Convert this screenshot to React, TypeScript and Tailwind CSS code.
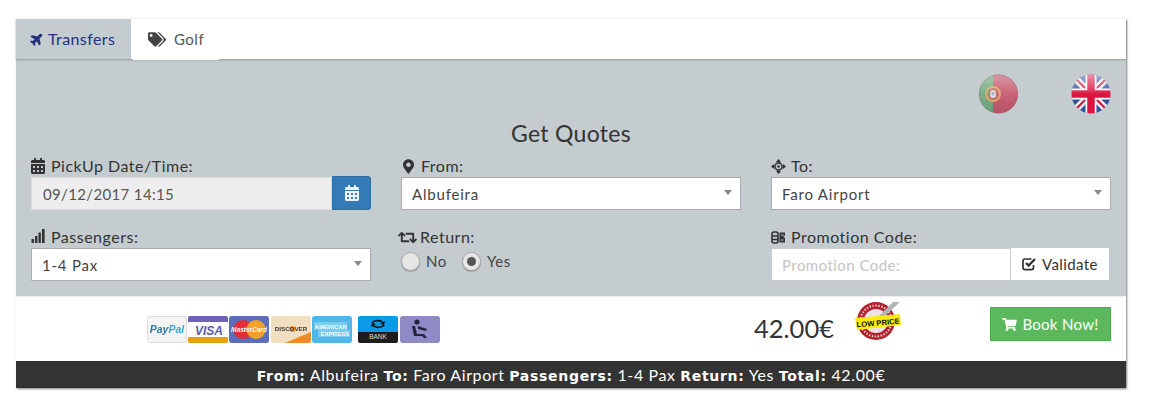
import React from "react";
import { FaTags, FaCalendarAlt, FaMapMarkerAlt, FaRetweet, FaShoppingCart, FaPlane } from "react-icons/fa";

const font = { fontFamily: "Lato, sans-serif" };
const cardText = { fontFamily: "'Liberation Sans', sans-serif" };

function Label({ icon, text, gap = "gap-[5px]" }: { icon: React.ReactNode; text: string; gap?: string }) {
  return (
    <div className={`flex h-[21px] items-center pb-[1px] ${gap} text-[16px] leading-[20px] tracking-[0.5px] text-[#333]`}>
      {icon}
      <span>{text}</span>
    </div>
  );
}

function Select({ value }: { value: string }) {
  return (
    <div className="flex h-[33px] items-center justify-between border border-[#aaa] bg-white pl-[10px] pr-[8px] text-[15px] tracking-[0.8px] text-[#444]">
      <span className="pt-[1px]">{value}</span>
      <span className="mt-[-2px] h-0 w-0 border-x-[4px] border-t-[5px] border-x-transparent border-t-[#888]" />
    </div>
  );
}

function Radio({ on, label }: { on?: boolean; label: string }) {
  return (
    <div className="flex items-center gap-[6px]">
      <span className="flex h-[19px] w-[19px] items-center justify-center rounded-full border border-[#aaa] bg-[#e6e6e6] shadow-[0_1px_1px_rgba(0,0,0,0.25)]">
        {on && <span className="h-[9px] w-[9px] rounded-full bg-[#555]" />}
      </span>
      <span>{label}</span>
    </div>
  );
}

function PromoIcon() {
  return (
    <svg width="15" height="15" viewBox="0 0 15 15" className="text-[#333]">
      <rect x="1" y="2" width="6" height="11" rx="2" fill="none" stroke="currentColor" strokeWidth="1.6" />
      <path d="M1 6h6M1 9.5h6" stroke="currentColor" strokeWidth="1.4" />
      <path d="M8.5 2.5h5.5v3l-2 1 2 1.5v4.5H8.5z" fill="currentColor" />
      <path d="M10 5h2.5M10 10h2.5" stroke="#c4cccf" strokeWidth="1" />
    </svg>
  );
}

function SignalIcon() {
  return (
    <svg width="15" height="14" viewBox="0 0 15 14" fill="#333" className="mb-[2px]">
      <rect x="0.5" y="10" width="2.4" height="4" />
      <rect x="4" y="7" width="2.4" height="7" />
      <rect x="7.5" y="3.5" width="2.4" height="10.5" />
      <rect x="11" y="0" width="2.6" height="14" />
    </svg>
  );
}

function MoveIcon() {
  return (
    <svg width="15" height="15" viewBox="0 0 15 15" fill="#333">
      <path d="M7.5 0L10 3H5zM7.5 15L5 12h5zM0 7.5L3 5v5zM15 7.5L12 10V5z" />
      <circle cx="7.5" cy="7.5" r="3.6" fill="none" stroke="#333" strokeWidth="1.6" />
      <circle cx="7.5" cy="7.5" r="1.3" />
    </svg>
  );
}

function CheckIcon() {
  return (
    <svg width="15" height="14" viewBox="0 0 15 14">
      <path d="M11.5 8v2.6a2 2 0 0 1-2 2H3a2 2 0 0 1-2-2V4a2 2 0 0 1 2-2h6.5" fill="none" stroke="#333" strokeWidth="1.7" />
      <path d="M4 6l2.6 2.6L13 2" fill="none" stroke="#333" strokeWidth="2.4" />
    </svg>
  );
}

function PortugalFlag() {
  return (
    <svg width="39" height="40" viewBox="0 0 39 40">
      <defs>
        <clipPath id="ptc"><circle cx="19.5" cy="20" r="19.5" /></clipPath>
        <linearGradient id="ptg" x1="0" y1="0" x2="0" y2="1">
          <stop offset="0%" stopColor="#fff" stopOpacity="0.4" />
          <stop offset="50%" stopColor="#fff" stopOpacity="0.08" />
          <stop offset="100%" stopColor="#000" stopOpacity="0.06" />
        </linearGradient>
      </defs>
      <g clipPath="url(#ptc)">
        <rect width="14" height="40" fill="#6fa87f" />
        <rect x="14" width="26" height="40" fill="#c4566c" />
        <circle cx="14" cy="20" r="7" fill="none" stroke="#d9a860" strokeWidth="2" />
        <rect x="10.5" y="15.5" width="7" height="9" rx="2.5" fill="#e8e8ec" stroke="#c9605f" strokeWidth="1.5" />
        <rect x="12.5" y="17.5" width="3" height="4" fill="#a0b2cd" />
        <rect width="40" height="40" fill="url(#ptg)" />
      </g>
      <circle cx="19.5" cy="20" r="19" fill="none" stroke="#8d6a74" strokeOpacity="0.35" />
    </svg>
  );
}

function UkFlag() {
  return (
    <svg width="40" height="40" viewBox="0 0 40 40">
      <defs>
        <clipPath id="ukc"><circle cx="20" cy="20" r="19.5" /></clipPath>
        <linearGradient id="ukg" x1="0" y1="0" x2="0" y2="1">
          <stop offset="0%" stopColor="#fff" stopOpacity="0.55" />
          <stop offset="42%" stopColor="#fff" stopOpacity="0.15" />
          <stop offset="50%" stopColor="#fff" stopOpacity="0" />
        </linearGradient>
      </defs>
      <g clipPath="url(#ukc)">
        <rect width="40" height="40" fill="#34519f" />
        <path d="M0 0L40 40M40 0L0 40" stroke="#f2f2f2" strokeWidth="7" />
        <path d="M0 0L40 40M40 0L0 40" stroke="#d21a44" strokeWidth="2.2" />
        <path d="M20 0V40M0 20H40" stroke="#fff" strokeWidth="11" />
        <path d="M20 0V40M0 20H40" stroke="#dc1440" strokeWidth="7.5" />
        <rect width="40" height="40" fill="url(#ukg)" />
      </g>
    </svg>
  );
}

function PaymentCards() {
  const c = "block h-[27px] w-[40px] rounded-[2px]";
  const vb = "0 0 40 27";
  return (
    <div className="flex items-center gap-[1px] blur-[0.4px]">
      <svg className={c} viewBox={vb}>
        <rect x="0.5" y="0.5" width="39" height="26" rx="2" fill="#f4f4f4" stroke="#ddd" />
        <text x="20" y="17" textAnchor="middle" fontSize="10.5" fontWeight="700" fontStyle="italic" style={cardText}>
          <tspan fill="#2a7ba6">Pay</tspan><tspan fill="#3aa6d6">Pal</tspan>
        </text>
      </svg>
      <svg className={c} viewBox={vb}>
        <rect width="40" height="27" fill="#fff" />
        <rect width="40" height="6" fill="#6c63b8" />
        <rect y="21" width="40" height="6" fill="#e8a013" />
        <text x="21" y="19" textAnchor="middle" fontSize="12" fontWeight="700" fontStyle="italic" fill="#5a5aa8" style={cardText}>VISA</text>
      </svg>
      <svg className={`${c} mr-[1px]`} viewBox={vb}>
        <rect width="40" height="27" rx="2" fill="#5c6dbb" />
        <circle cx="14" cy="13.5" r="9.5" fill="#e22c38" />
        <circle cx="27" cy="13.5" r="9.5" fill="#f4a12c" />
        <text x="20" y="16" textAnchor="middle" fontSize="6.5" fontWeight="700" fontStyle="italic" fill="#fff" style={cardText}>MasterCard</text>
      </svg>
      <svg className={c} viewBox={vb}>
        <rect width="40" height="27" rx="2" fill="#f2dfc0" />
        <path d="M14 27L40 16V27z" fill="#f08a24" />
        <circle cx="21.5" cy="13" r="3" fill="#f08a24" />
        <text x="20" y="15" textAnchor="middle" fontSize="6.2" fontWeight="700" fill="#3a3a3a" style={cardText}>DISCOVER</text>
      </svg>
      <svg className={c} viewBox={vb}>
        <rect width="40" height="27" rx="2" fill="#4fb8ea" />
        <rect x="2" y="6" width="33" height="8" rx="1" fill="#fff" fillOpacity="0.25" />
        <rect x="6" y="14" width="32" height="7" rx="1" fill="#fff" fillOpacity="0.25" />
        <text x="19" y="12.5" textAnchor="middle" fontSize="6" fontWeight="700" fill="#fff" style={cardText}>AMERICAN</text>
        <text x="23" y="19.5" textAnchor="middle" fontSize="6" fontWeight="700" fill="#fff" style={cardText}>EXPRESS</text>
      </svg>
      <div className="w-[4px]" />
      <svg className={`${c} mr-[1px]`} viewBox={vb}>
        <rect width="40" height="16" fill="#0a9be8" />
        <rect y="16" width="40" height="11" fill="#1d1d1d" />
        <path d="M13 7c3-4 10-4 12-1l2-1-1 4-4-1 2-1c-2-2-7-2-9 0zM27 9c-3 4-10 4-12 1l-2 1 1-4 4 1-2 1c2 2 7 2 9 0z" fill="#111" />
        <text x="20" y="23" textAnchor="middle" fontSize="6.5" fill="#ddd" style={cardText}>BANK</text>
      </svg>
      <svg className={c} viewBox={vb}>
        <rect width="40" height="27" rx="2" fill="#8f8bc7" />
        <g fill="#26243a">
          <circle cx="17" cy="6" r="2.6" />
          <path d="M12 10l3 0 2 8h7l3 4h-3l-2-2H14z" />
          <path d="M18 10l9 3-1 2-8-2z" />
        </g>
      </svg>
    </div>
  );
}

function PriceBadge() {
  return (
    <svg width="46" height="42" viewBox="0 0 46 42">
      <circle cx="21" cy="21" r="19" fill="#b3212e" />
      <circle cx="21" cy="21" r="15.5" fill="none" stroke="#eecfd0" strokeWidth="2" strokeDasharray="1.5 1.5" />
      <circle cx="21" cy="21" r="12" fill="#ece4e4" />
      <path d="M17 23l-5-5-2 2 7 8L45 2h-7z" fill="#b5b5b5" />
      <path d="M0 18L45 14l1 11L2 30z" fill="#fde910" />
      <text x="23" y="25.5" textAnchor="middle" fontSize="7.6" fontWeight="700" fill="#111" transform="rotate(-5 23 22)" style={cardText}>LOW PRICE</text>
    </svg>
  );
}

const strong = "font-bold tracking-[0.7px] text-[14px] font-['DejaVu_Sans']";

export default function App() {
  return (
    <div className="h-[403px] w-[1153px] bg-white pl-[16px] pt-[19px]" style={font}>
      <div className="w-[1110px] bg-white shadow-[1px_1px_2px_rgba(0,0,0,0.5)]">
        {/* Tabs */}
        <div className="relative flex h-[40px] shadow-[0_1px_2px_rgba(0,0,0,0.25)]">
          <div className="flex w-[115px] items-center gap-[4px] bg-[#c4cccf] pl-[14px] text-[16px] tracking-[0.4px] text-[#23317f]">
            <FaPlane className="h-[14px] w-[14px] -rotate-45" />
            <span>Transfers</span>
          </div>
          <div className="relative z-10 ml-[2px] flex h-[41px] w-[86px] items-center gap-[8px] bg-white pb-[1px] pl-[15px] text-[15px] tracking-[0.5px] text-[#555]">
            <FaTags className="h-[17px] w-[18px] text-[#444]" />
            <span>Golf</span>
          </div>
        </div>

        {/* Form panel */}
        <div className="h-[237px] bg-[#c4cccf] px-[15px] pt-[15px]">
          <div className="flex h-[40px] justify-end">
            <PortugalFlag />
            <div className="w-[53px]" />
            <UkFlag />
          </div>
          <h2 className="mt-[5px] h-[27px] text-center text-[23px] leading-[28px] tracking-[0.3px] text-[#333]">Get Quotes</h2>
          <div className="mt-[10px] grid grid-cols-3 gap-x-[30px]">
            <div>
              <Label icon={<FaCalendarAlt className="h-[16px] w-[14px]" />} text="PickUp Date/Time:" gap="gap-[6px]" />
              <div className="flex h-[33px]">
                <div className="flex flex-1 items-center border border-[#ddd] bg-[#eee] pl-[11px] pt-[1px] text-[15px] tracking-[0.35px] text-[#555]">09/12/2017 14:15</div>
                <div className="-mt-[1px] flex h-[34px] w-[39px] items-center justify-center rounded-r-[3px] border border-[#2e6da4] bg-[#337ab7] text-white">
                  <FaCalendarAlt className="h-[16px] w-[14px] text-[#eaf2f8]" />
                </div>
              </div>
            </div>
            <div>
              <Label icon={<FaMapMarkerAlt className="ml-[2px] h-[15px] w-[11px]" />} text="From:" gap="gap-[7px]" />
              <Select value="Albufeira" />
            </div>
            <div>
              <Label icon={<MoveIcon />} text="To:" />
              <Select value="Faro Airport" />
            </div>

            <div className="mt-[17px]">
              <Label icon={<SignalIcon />} text="Passengers:" />
              <Select value="1-4 Pax" />
            </div>
            <div className="mt-[17px]">
              <div className="-ml-[3px]">
                <Label icon={<FaRetweet className="h-[17px] w-[19px]" />} text="Return:" gap="gap-[3px]" />
              </div>
              <div className="mt-[2px] flex gap-[15px] text-[15px] tracking-[0.6px] text-[#444]">
                <Radio label="No" />
                <Radio on label="Yes" />
              </div>
            </div>
            <div className="mt-[17px]">
              <Label icon={<PromoIcon />} text="Promotion Code:" />
              <div className="flex h-[33px]">
                <div className="flex flex-1 items-center border border-[#ccc] bg-white pl-[10px] pt-[1px] text-[15px] tracking-[0.45px] text-[#c4c4c4]">Promotion Code:</div>
                <div className="mr-[2px] flex h-[32px] w-[98px] items-center justify-center gap-[5px] bg-white text-[15px] tracking-[0.4px] text-[#333]">
                  <CheckIcon />
                  <span>Validate</span>
                </div>
              </div>
            </div>
          </div>
        </div>

        {/* Price row */}
        <div className="flex h-[65px] border-t border-[#eee]">
          <div className="ml-[131px] mt-[19px]"><PaymentCards /></div>
          <div className="ml-[314px] mt-[13px] text-[25.5px] leading-[36px] text-[#333]">42.00€</div>
          <div className="ml-[21px] mt-[3px]"><PriceBadge /></div>
          <div className="ml-[89px] mt-[10px] flex h-[34px] w-[121px] items-center justify-center gap-[5px] border border-[#4cae4c] bg-[#5cb85c] text-[15px] tracking-[0.3px] text-white">
            <FaShoppingCart className="h-[13px] w-[15px]" />
            <span>Book Now!</span>
          </div>
        </div>

        {/* Summary */}
        <div className="flex h-[27px] items-center justify-center bg-[#333] text-[16px] tracking-[0.6px] text-white">
          <span className="whitespace-pre"><b className={strong}>From:</b> Albufeira <b className={strong}>To:</b> Faro Airport <b className={strong}>Passengers:</b> 1-4 Pax <b className={strong}>Return:</b> Yes <b className={strong}>Total:</b> 42.00€</span>
        </div>
      </div>
    </div>
  );
}
